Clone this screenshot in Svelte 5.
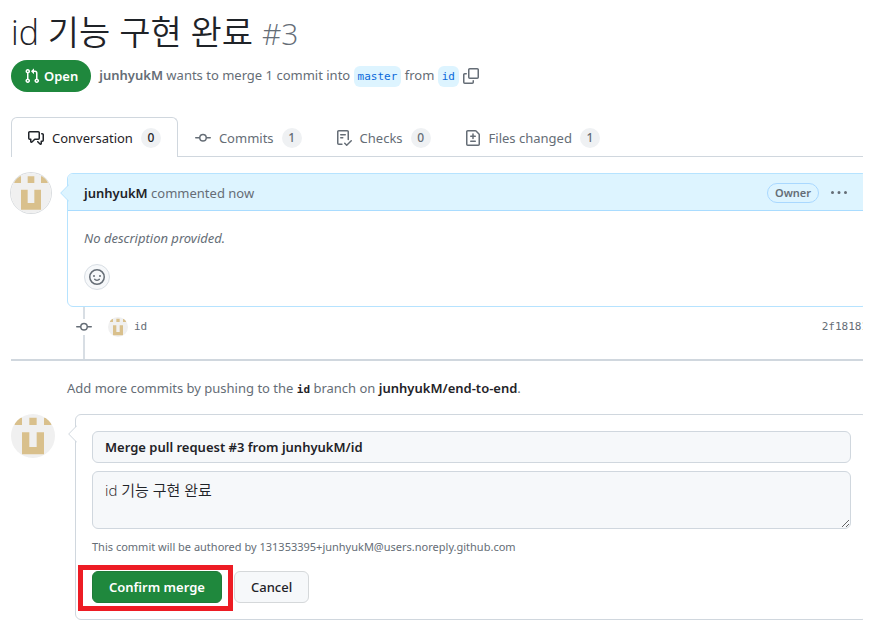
<script>
  const icons = {
    pull: 'M1.5 3.25a2.25 2.25 0 1 1 3 2.122v5.256a2.251 2.251 0 1 1-1.5 0V5.372A2.25 2.25 0 0 1 1.5 3.25Zm5.677-.177L9.573.677A.25.25 0 0 1 10 .854V2.5h1A2.5 2.5 0 0 1 13.5 5v5.628a2.251 2.251 0 1 1-1.5 0V5a1 1 0 0 0-1-1h-1v1.646a.25.25 0 0 1-.427.177L7.177 3.427a.25.25 0 0 1 0-.354ZM3.75 2.5a.75.75 0 1 0 0 1.5.75.75 0 0 0 0-1.5Zm0 9.5a.75.75 0 1 0 0 1.5.75.75 0 0 0 0-1.5Zm8.25.75a.75.75 0 1 0 1.5 0 .75.75 0 0 0-1.5 0Z',
    copy: 'M0 6.75C0 5.784.784 5 1.75 5h1.5a.75.75 0 0 1 0 1.5h-1.5a.25.25 0 0 0-.25.25v7.5c0 .138.112.25.25.25h7.5a.25.25 0 0 0 .25-.25v-1.5a.75.75 0 0 1 1.5 0v1.5A1.75 1.75 0 0 1 9.25 16h-7.5A1.75 1.75 0 0 1 0 14.25ZM5 1.75C5 .784 5.784 0 6.75 0h7.5C15.216 0 16 .784 16 1.75v7.5A1.75 1.75 0 0 1 14.25 11h-7.5A1.75 1.75 0 0 1 5 9.25Zm1.75-.25a.25.25 0 0 0-.25.25v7.5c0 .138.112.25.25.25h7.5a.25.25 0 0 0 .25-.25v-7.5a.25.25 0 0 0-.25-.25Z',
    discussion: 'M1.75 1h8.5c.966 0 1.75.784 1.75 1.75v5.5A1.75 1.75 0 0 1 10.25 10H7.061l-2.574 2.573A1.458 1.458 0 0 1 2 11.543V10h-.25A1.75 1.75 0 0 1 0 8.25v-5.5C0 1.784.784 1 1.75 1ZM1.5 2.75v5.5c0 .138.112.25.25.25h1a.75.75 0 0 1 .75.75v2.19l2.72-2.72a.749.749 0 0 1 .53-.22h3.5a.25.25 0 0 0 .25-.25v-5.5a.25.25 0 0 0-.25-.25h-8.5a.25.25 0 0 0-.25.25Zm13 2a.25.25 0 0 0-.25-.25h-.5a.75.75 0 0 1 0-1.5h.5c.966 0 1.75.784 1.75 1.75v5.5A1.75 1.75 0 0 1 14.25 12H14v1.543a1.458 1.458 0 0 1-2.487 1.03L9.22 12.28a.749.749 0 0 1 .326-1.275.749.749 0 0 1 .734.215l2.22 2.22v-2.19a.75.75 0 0 1 .75-.75h1a.25.25 0 0 0 .25-.25Z',
    commit: 'M11.93 8.5a4.002 4.002 0 0 1-7.86 0H.75a.75.75 0 0 1 0-1.5h3.32a4.002 4.002 0 0 1 7.86 0h3.32a.75.75 0 0 1 0 1.5Zm-1.43-.75a2.5 2.5 0 1 0-5 0 2.5 2.5 0 0 0 5 0Z',
    checklist: 'M2.5 1.75v11.5c0 .138.112.25.25.25h3.17a.75.75 0 0 1 0 1.5H2.75A1.75 1.75 0 0 1 1 13.25V1.75C1 .784 1.784 0 2.75 0h8.5C12.216 0 13 .784 13 1.75v7.736a.75.75 0 0 1-1.5 0V1.75a.25.25 0 0 0-.25-.25h-8.5a.25.25 0 0 0-.25.25Zm13.274 9.537v-.001l-4.557 4.45a.75.75 0 0 1-1.055-.008l-1.943-1.95a.75.75 0 0 1 1.062-1.058l1.419 1.425 4.026-3.932a.75.75 0 1 1 1.048 1.074ZM4.75 4h4.5a.75.75 0 0 1 0 1.5h-4.5a.75.75 0 0 1 0-1.5ZM4 7.75A.75.75 0 0 1 4.75 7h2a.75.75 0 0 1 0 1.5h-2A.75.75 0 0 1 4 7.75Z',
    diff: 'M1 1.75C1 .784 1.784 0 2.75 0h7.586c.464 0 .909.184 1.237.513l2.914 2.914c.329.328.513.773.513 1.237v9.586A1.75 1.75 0 0 1 13.25 16H2.75A1.75 1.75 0 0 1 1 14.25Zm1.75-.25a.25.25 0 0 0-.25.25v12.5c0 .138.112.25.25.25h10.5a.25.25 0 0 0 .25-.25V4.664a.25.25 0 0 0-.073-.177l-2.914-2.914a.25.25 0 0 0-.177-.073ZM8 3.25a.75.75 0 0 1 .75.75v1.5h1.5a.75.75 0 0 1 0 1.5h-1.5v1.5a.75.75 0 0 1-1.5 0V7h-1.5a.75.75 0 0 1 0-1.5h1.5V4A.75.75 0 0 1 8 3.25Zm-3 8a.75.75 0 0 1 .75-.75h4.5a.75.75 0 0 1 0 1.5h-4.5a.75.75 0 0 1-.75-.75Z',
    smiley: 'M8 0a8 8 0 1 1 0 16A8 8 0 0 1 8 0ZM1.5 8a6.5 6.5 0 1 0 13 0 6.5 6.5 0 0 0-13 0Zm3.82 1.636a.75.75 0 0 1 1.038.175l.007.009c.103.118.22.222.35.31.264.178.683.37 1.285.37.602 0 1.02-.192 1.285-.371.13-.088.247-.192.35-.31l.007-.008a.75.75 0 0 1 1.222.87c-.16.2-.36.42-.75.68-.63.418-1.37.638-2.127.629-.946 0-1.652-.308-2.126-.63a3.331 3.331 0 0 1-.73-.68a.75.75 0 0 1 .183-1.044ZM12 7a1 1 0 1 1-2 0 1 1 0 0 1 2 0ZM5 8a1 1 0 1 1 0-2 1 1 0 0 1 0 2Z',
    kebab: 'M8 9a1.5 1.5 0 1 0 0-3 1.5 1.5 0 0 0 0 3ZM1.5 9a1.5 1.5 0 1 0 0-3 1.5 1.5 0 0 0 0 3Zm13 0a1.5 1.5 0 1 0 0-3 1.5 1.5 0 0 0 0 3Z'
  };

  const tabs = [
    { label: 'Conversation', icon: 'discussion', count: 0, active: true },
    { label: 'Commits', icon: 'commit', count: 1 },
    { label: 'Checks', icon: 'checklist', count: 0 },
    { label: 'Files changed', icon: 'diff', count: 1 }
  ];

  let title = $state('Merge pull request #3 from junhyukM/id');
  let message = $state('id 기능 구현 완료');
</script>

{#snippet icon(name)}
  <svg class="icon" viewBox="0 0 16 16" width="16" height="16" aria-hidden="true">
    <path d={icons[name]} />
  </svg>
{/snippet}

{#snippet avatar(kind)}
  <svg class="avatar {kind}" viewBox="0 0 420 420" role="img" aria-label="junhyukM">
    <rect width="420" height="420" fill="#f0f0f0" />
    <path
      fill="#d9c08c"
      d="M35 35h70v70h-70zM175 35h70v70h-70zM315 35h70v70h-70zM105 175h70v140h70v-140h70v210h-210z"
    />
  </svg>
{/snippet}

{#snippet caret(kind)}
  <svg class="caret {kind}" viewBox="0 0 9 18" width="9" height="18" aria-hidden="true">
    <path d="M9 .5L.7 9L9 17.5" />
  </svg>
{/snippet}

<main>
  <header>
    <h1>id 기능 구현 완료 <span>#3</span></h1>
    <div class="meta">
      <span class="state">{@render icon('pull')}Open</span>
      <p>
        <a class="author" href="#author">junhyukM</a> wants to merge 1 commit into
        <a class="branch" href="#master">master</a> from
        <a class="branch" href="#id">id</a>
      </p>
      <button class="plain" aria-label="Copy branch name">{@render icon('copy')}</button>
    </div>
  </header>

  <nav>
    {#each tabs as tab}
      <a href="#{tab.icon}" class:active={tab.active}>
        {@render icon(tab.icon)}
        <span>{tab.label}</span>
        <span class="count">{tab.count}</span>
      </a>
    {/each}
  </nav>

  <section class="timeline">
    {@render avatar('ringed')}
    <div class="thread">
      <article>
        {@render caret('blue')}
        <div class="head">
          <span><a class="name" href="#author">junhyukM</a> commented now</span>
          <span class="owner">Owner</span>
          <button class="plain" aria-label="Comment options">{@render icon('kebab')}</button>
        </div>
        <div class="body">
          <em>No description provided.</em>
          <button class="react" aria-label="Add a reaction">{@render icon('smiley')}</button>
        </div>
      </article>
      <div class="commit">
        <span class="dot">{@render icon('commit')}</span>
        {@render avatar('small')}
        <a href="#commit">id</a>
        <a class="hash" href="#hash">2f18181</a>
      </div>
    </div>
  </section>

  <p class="hint">
    Add more commits by pushing to the <code>id</code> branch on
    <a class="name" href="#repo">junhyukM/end-to-end</a>.
  </p>

  <section class="merge">
    {@render avatar('large')}
    <form onsubmit={(e) => e.preventDefault()}>
      {@render caret('grey')}
      <input type="text" aria-label="Commit title" bind:value={title} />
      <textarea aria-label="Commit message" bind:value={message}></textarea>
      <p>This commit will be authored by 131353395+junhyukM@users.noreply.github.com</p>
      <div class="actions">
        <span class="marked"><button class="confirm">Confirm merge</button></span>
        <button class="cancel" type="button">Cancel</button>
      </div>
    </form>
  </section>
</main>

<style>
  :global(body) {
    margin: 0;
    background: #fff;
  }
  main {
    --sans: 'Noto Sans', 'Noto Sans CJK KR', sans-serif;
    --title: 'Open Sans', 'Noto Sans CJK KR', sans-serif;
    --mono: 'DejaVu Sans Mono', monospace;
    margin: 0 8px 0 0;
    padding: 12px 0 7px 11px;
    overflow: hidden;
    font: 13px/20px var(--sans);
    color: #656d76;
  }
  main :global(*) {
    box-sizing: border-box;
  }
  a {
    color: inherit;
    text-decoration: none;
  }
  p {
    margin: 0;
  }
  button,
  input,
  textarea {
    display: block;
    margin: 0;
    font: inherit;
    color: #1f2328;
  }
  .icon {
    display: block;
    flex: none;
    fill: currentColor;
  }
  .plain {
    padding: 0;
    border: 0;
    background: none;
    color: #656d76;
  }

  h1 {
    height: 40px;
    margin: 0 0 8px;
    font: 350 34px/40px var(--title);
    color: #1f2328;
  }
  h1 span {
    font-size: 30px;
    font-weight: 300;
    color: #656d76;
  }
  .meta {
    display: flex;
    align-items: center;
  }
  .state {
    display: flex;
    align-items: center;
    gap: 4px;
    height: 32px;
    margin-right: 8px;
    padding: 0 13px;
    border-radius: 16px;
    background: #1f883d;
    color: #fff;
    font-weight: 600;
  }
  .meta p {
    margin-right: 4px;
  }
  .author,
  .name {
    font-weight: 600;
  }
  .name {
    color: #1f2328;
  }
  .branch {
    display: inline-block;
    padding: 0 4px;
    border-radius: 6px;
    background: #ddf4ff;
    color: #0969da;
    font: 11px/21px var(--mono);
  }

  nav {
    display: flex;
    height: 40px;
    margin: 25px 0 16px;
    box-shadow: inset 0 -1px #d0d7de;
  }
  nav a {
    display: flex;
    align-items: center;
    gap: 8px;
    padding: 2px 17px 0;
    border-radius: 6px 6px 0 0;
  }
  nav a.active {
    padding: 1px 16px 0;
    border: 1px solid #d0d7de;
    border-bottom: 0;
    background: #fff;
    color: #1f2328;
  }
  .count {
    min-width: 20px;
    border-radius: 10px;
    background: #eff1f3;
    font-size: 12px;
    font-weight: 500;
    text-align: center;
  }

  .timeline,
  .merge {
    display: flex;
    align-items: flex-start;
  }
  .avatar {
    display: block;
    flex: none;
    border-radius: 50%;
  }
  .ringed {
    width: 40px;
    height: 40px;
    margin-right: 16px;
    box-shadow: 0 0 0 1px #d9dcdf;
  }
  .large {
    width: 44px;
    height: 44px;
    margin-right: 20px;
  }
  .small {
    width: 20px;
    height: 20px;
  }
  .timeline {
    border-bottom: 2px solid #d0d7de;
  }
  .thread,
  form {
    flex: 1;
    min-width: 0;
    margin-right: -5px;
  }
  article {
    position: relative;
    border: 1px solid #b6e3ff;
    border-radius: 6px;
  }
  .caret {
    position: absolute;
    left: -8px;
    top: 10px;
    stroke-width: 1;
  }
  .blue {
    fill: #ddf4ff;
    stroke: #b6e3ff;
  }
  .grey {
    fill: #fff;
    stroke: #d0d7de;
  }
  .head {
    display: flex;
    align-items: center;
    height: 37px;
    padding: 2px 20px 0 16px;
    border-bottom: 1px solid #a9dcff;
    border-radius: 5px 5px 0 0;
    background: #ddf4ff;
  }
  .owner {
    margin: 0 12px 0 auto;
    padding: 0 7px;
    border: 1px solid #a9d8ff;
    border-radius: 10px;
    font-size: 11px;
    font-weight: 600;
    line-height: 18px;
  }
  .body {
    padding: 17px 16px 16px;
  }
  .react {
    display: grid;
    place-items: center;
    width: 26px;
    height: 26px;
    margin-top: 16px;
    padding: 0;
    border: 1px solid #d8dee4;
    border-radius: 50%;
    background: #f6f8fa;
    color: #656d76;
  }
  .commit {
    display: flex;
    align-items: center;
    height: 52px;
    padding: 0 0 12px 16px;
    background: linear-gradient(#d8dee4, #d8dee4) 16px 0 / 2px 100% no-repeat;
    font: 11px/20px var(--mono);
  }
  .dot {
    margin: 0 16px 0 -7px;
    background: #fff;
  }
  .commit a {
    margin-left: 6px;
  }
  .commit .hash {
    margin-left: auto;
  }

  .hint {
    padding: 17px 0 15px 56px;
  }
  code {
    font: 700 11px/18px var(--mono);
    color: #1f2328;
  }

  form {
    position: relative;
    padding: 16px;
    border: 1px solid #d0d7de;
    border-radius: 6px;
  }
  input,
  textarea {
    width: 100%;
    padding: 5px 12px;
    border: 1px solid #d0d7de;
    border-radius: 6px;
    background: #f6f8fa;
  }
  input {
    height: 32px;
    font-weight: 600;
  }
  textarea {
    height: 58px;
    margin: 8px 0;
    padding: 8px 12px;
    font: 350 15px/20px var(--title);
    resize: vertical;
  }
  form p {
    font-size: 11px;
  }
  .actions {
    display: flex;
    gap: 12px;
    margin-top: 14px;
  }
  .actions button {
    height: 32px;
    padding: 0 16px;
    border: 1px solid #d5d8da;
    border-radius: 6px;
    background: #f6f8fa;
    font-weight: 500;
  }
  .actions .confirm {
    border-color: #1f7a38;
    background: #1f883d;
    color: #fff;
    font-weight: 600;
  }
  .marked {
    position: relative;
  }
  .marked::after {
    content: '';
    position: absolute;
    inset: -6px -11px -8px -14px;
    border: 5px solid #ed1c24;
    pointer-events: none;
  }
</style>
